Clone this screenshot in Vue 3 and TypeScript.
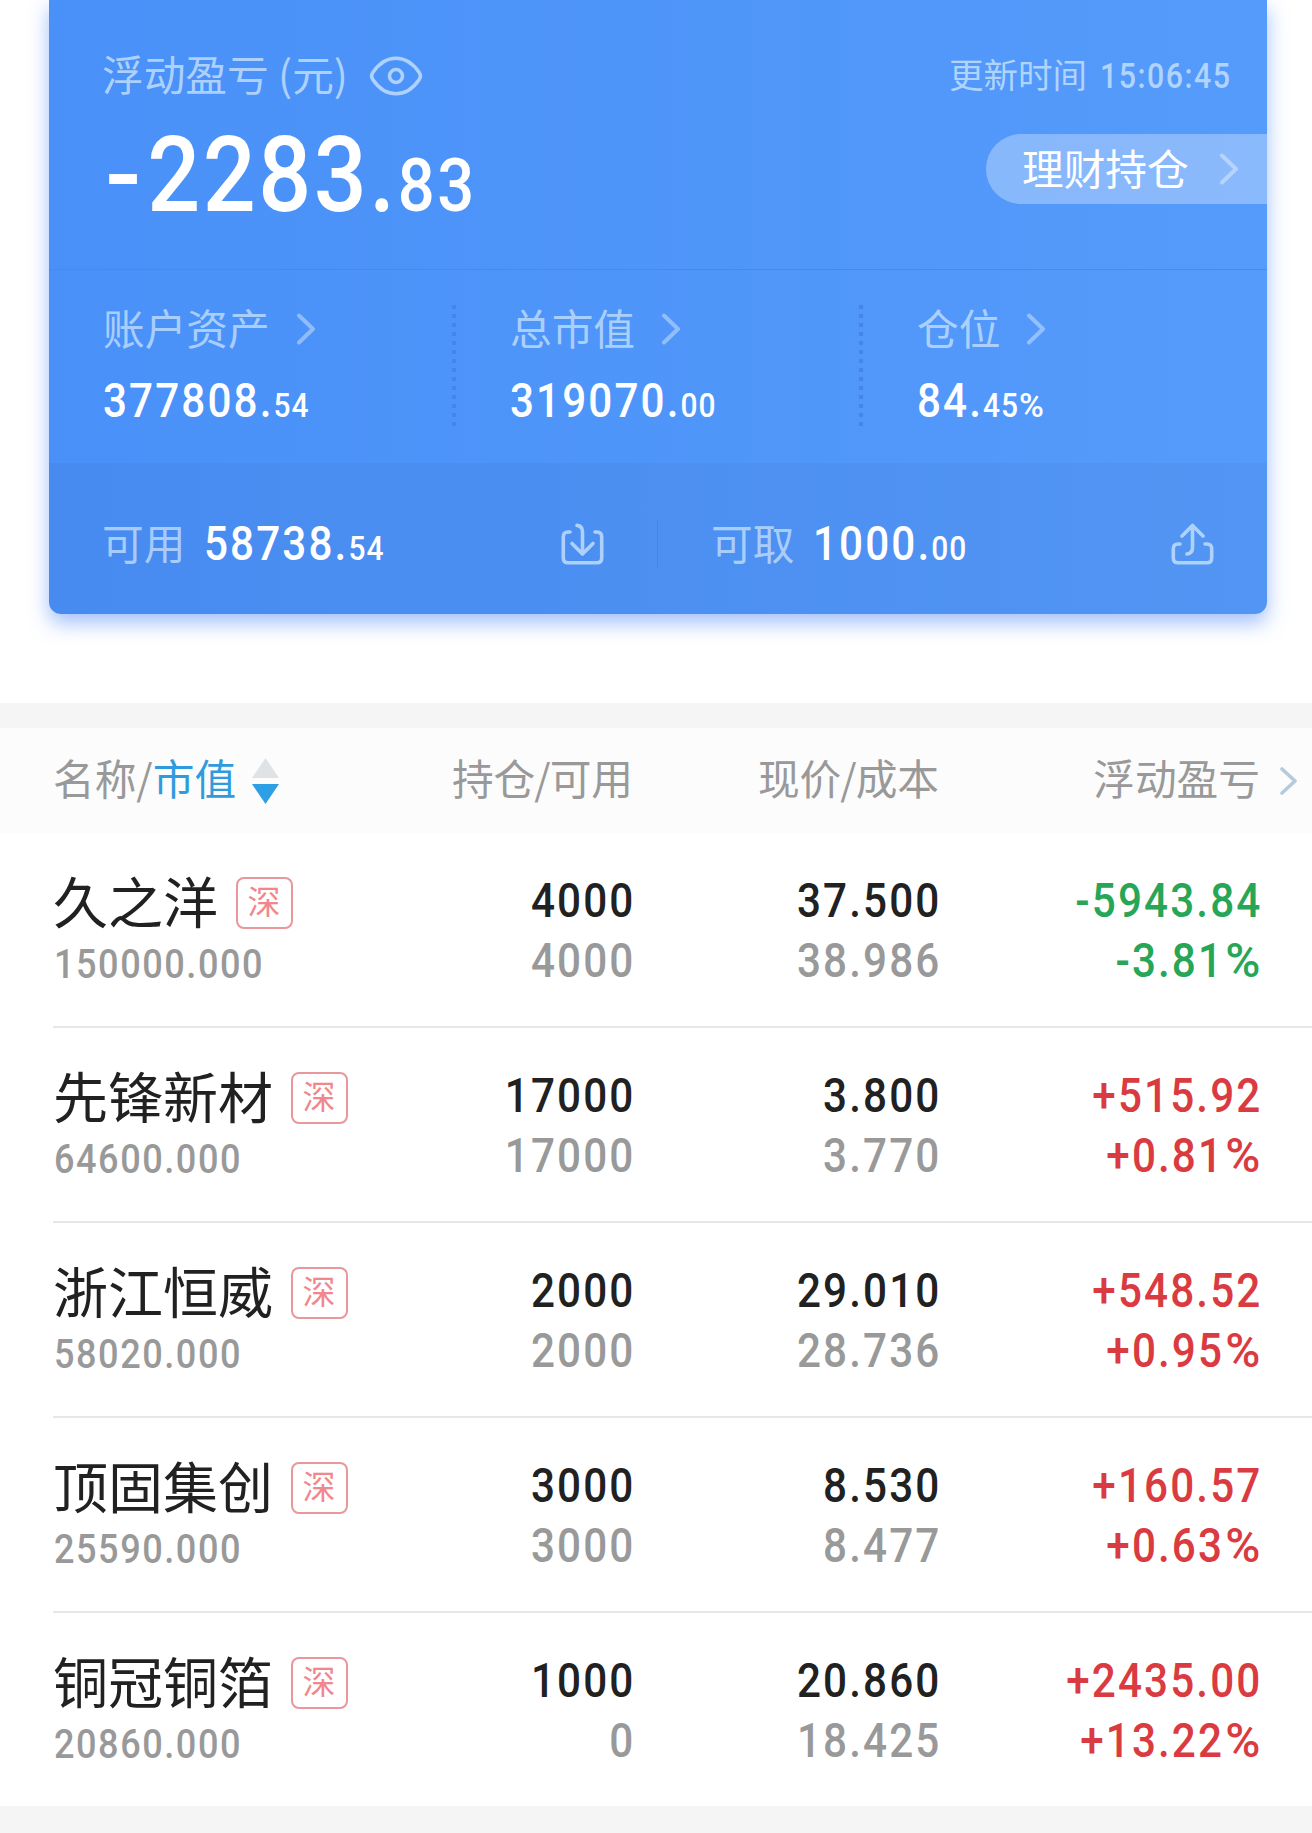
<script setup lang="ts">
interface Metric {
  label: string
  whole: string
  fraction: string
  unit?: string
}

interface Holding {
  name: string
  marketValue: string
  amount: string
  available: string
  price: string
  cost: string
  profit: string
  rate: string
}

const metrics: Metric[] = [
  { label: '账户资产', whole: '377808.', fraction: '54' },
  { label: '总市值', whole: '319070.', fraction: '00' },
  { label: '仓位', whole: '84.', fraction: '45', unit: '%' },
]

const holdings: Holding[] = [
  { name: '久之洋', marketValue: '150000.000', amount: '4000', available: '4000', price: '37.500', cost: '38.986', profit: '-5943.84', rate: '-3.81' },
  { name: '先锋新材', marketValue: '64600.000', amount: '17000', available: '17000', price: '3.800', cost: '3.770', profit: '+515.92', rate: '+0.81' },
  { name: '浙江恒威', marketValue: '58020.000', amount: '2000', available: '2000', price: '29.010', cost: '28.736', profit: '+548.52', rate: '+0.95' },
  { name: '顶固集创', marketValue: '25590.000', amount: '3000', available: '3000', price: '8.530', cost: '8.477', profit: '+160.57', rate: '+0.63' },
  { name: '铜冠铜箔', marketValue: '20860.000', amount: '1000', available: '0', price: '20.860', cost: '18.425', profit: '+2435.00', rate: '+13.22' },
]

const isLoss = (h: Holding): boolean => h.profit.startsWith('-')
</script>

<template>
  <main class="page">
    <section class="overview">
      <div class="card">
        <div class="summary">
          <div class="summary-main">
            <div class="summary-label">
              <span>浮动盈亏 (元)</span>
              <svg class="eye" viewBox="0 0 54 42" fill="none" stroke="currentColor" stroke-width="3.600">
                <path d="M3.600 17.800 C9.500 9 18 3.300 27 3.300 C36 3.300 44.500 9 50.400 17.800 Q52.300 21 50.400 24.200 C44.500 33 36 38.700 27 38.700 C18 38.700 9.500 33 3.600 24.200 Q1.700 21 3.600 17.800 Z" />
                <circle cx="27" cy="21" r="6.500" />
              </svg>
            </div>
            <div class="num hero"><span class="hero-sign">-</span>2283.<span class="hero-fraction">83</span></div>
          </div>
          <div class="summary-side">
            <div class="updated"><span>更新时间</span><span class="num from-right time">15:06:45</span></div>
            <div class="pill">
              <span>理财持仓</span>
              <svg class="chevron" viewBox="0 0 20 32" fill="none" stroke="currentColor" stroke-width="4" stroke-linecap="round" stroke-linejoin="round"><path d="M3 2.500 L17 16 L3 29.500" /></svg>
            </div>
          </div>
        </div>

        <div class="metrics">
          <div v-for="m in metrics" :key="m.label" class="metric">
            <div class="metric-label">
              <span>{{ m.label }}</span>
              <svg class="chevron" viewBox="0 0 20 32" fill="none" stroke="currentColor" stroke-width="4" stroke-linecap="round" stroke-linejoin="round"><path d="M3 2.500 L17 16 L3 29.500" /></svg>
            </div>
            <div class="num amount">{{ m.whole }}<span class="fraction">{{ m.fraction }}<span v-if="m.unit" class="percent from-left">{{ m.unit }}</span></span></div>
          </div>
        </div>

        <div class="funds">
          <div class="fund">
            <span class="fund-label">可用</span>
            <span class="num amount">58738.<span class="fraction">54</span></span>
            <svg class="transfer" viewBox="0 0 42 42" fill="none" stroke="currentColor" stroke-width="3.600" stroke-linecap="round" stroke-linejoin="round">
              <path d="M8.500 9 H6.500 Q1.800 9 1.800 14 V34.800 Q1.800 39.800 6.500 39.800 H35.500 Q40.200 39.800 40.200 34.800 V14 Q40.200 9 35.500 9 H33.500" />
              <path d="M15.500 2.400 Q21 2.900 21 9 V30 M10.500 20.500 L21 31 L31.500 20.500" />
            </svg>
          </div>
          <div class="fund">
            <span class="fund-label">可取</span>
            <span class="num amount">1000.<span class="fraction">00</span></span>
            <svg class="transfer" viewBox="0 0 42 42" fill="none" stroke="currentColor" stroke-width="3.600" stroke-linecap="round" stroke-linejoin="round">
              <path d="M8.500 21 H6.500 Q1.800 21 1.800 26 V34.800 Q1.800 39.800 6.500 39.800 H35.500 Q40.200 39.800 40.200 34.800 V26 Q40.200 21 35.500 21 H33.500" />
              <path d="M15.500 31 Q21 30.500 21 24.500 V3 M10.500 13 L21 2.400 L31.500 13" />
            </svg>
          </div>
        </div>
      </div>
    </section>

    <section class="holdings">
      <header class="columns head">
        <div class="head-name">
          <span>名称/<span class="active">市值</span></span>
          <svg class="sort" viewBox="0 0 27 46"><path d="M13.500 0 L27 20 H0 Z" fill="#dfe3e6" /><path d="M0 26 H27 L13.500 46 Z" fill="#2e9fe4" /></svg>
        </div>
        <div class="cell">持仓<span class="slash">/</span>可用</div>
        <div class="cell">现价<span class="slash">/</span>成本</div>
        <div class="cell">浮动盈亏</div>
        <svg class="more" viewBox="0 0 17 28" fill="none" stroke="#b6cade" stroke-width="3.600" stroke-linecap="round" stroke-linejoin="round"><path d="M2 2 L15 14 L2 26" /></svg>
      </header>

      <article v-for="h in holdings" :key="h.name" class="columns row">
        <div class="stock">
          <div class="stock-name"><span>{{ h.name }}</span><span class="badge">深</span></div>
          <div class="num market">{{ h.marketValue }}</div>
        </div>
        <div class="cell figures">
          <div class="num from-right">{{ h.amount }}</div>
          <div class="num from-right muted">{{ h.available }}</div>
        </div>
        <div class="cell figures">
          <div class="num from-right">{{ h.price }}</div>
          <div class="num from-right muted">{{ h.cost }}</div>
        </div>
        <div class="cell figures" :class="isLoss(h) ? 'loss' : 'gain'">
          <div class="num from-right">{{ h.profit }}</div>
          <div class="num from-right">{{ h.rate }}<span class="percent">%</span></div>
        </div>
      </article>
    </section>
  </main>
</template>

<style>
body {
  margin: 0;
  background: #f5f5f5;
}
</style>

<style scoped>
.page {
  width: 1312px;
  height: 1833px;
  overflow: hidden;
  background: #f5f5f5;
  font-family: "Noto Sans CJK SC", sans-serif;
  font-size: 41.7px;
  line-height: 42px;
  white-space: nowrap;
}

/* Narrow, evenly spaced figures */
.num {
  font-family: Roboto, sans-serif;
  font-weight: 500;
  letter-spacing: 0.05em;
  transform: scaleX(0.88);
  transform-origin: left center;
}
.num.from-right {
  transform-origin: right center;
  margin-right: -0.05em;
}
.percent {
  display: inline-block;
  margin-left: 0.12em;
  transform: scaleX(1.13);
  transform-origin: right center;
}
.percent.from-left {
  margin-left: 0;
  transform-origin: left center;
}

.overview {
  height: 703px;
  box-sizing: border-box;
  padding: 0 45px 0 49px;
  background: #fff;
}
.card {
  width: 1218px;
  height: 614px;
  display: flex;
  flex-direction: column;
  border-radius: 0 0 12px 12px;
  background: linear-gradient(90deg, #4990f8, #559bfb);
  box-shadow: 0 9px 20px rgba(70, 130, 250, 0.5);
  color: #fff;
}
.summary {
  height: 269px;
  display: flex;
  justify-content: space-between;
  border-bottom: 1px solid #4889ed;
}
.summary-main {
  padding: 52px 0 0 53px;
}
.summary-label {
  display: flex;
  align-items: center;
  height: 42px;
  color: rgba(225, 243, 255, 0.66);
}
.eye {
  width: 54px;
  height: 42px;
  margin: 5px 0 0 21px;
}
.hero {
  margin: 31px 0 0 3px;
  width: 500px;
  font-size: 106px;
  line-height: 100px;
  letter-spacing: 0.027em;
}
.hero-sign {
  display: inline-block;
  margin-right: 9px;
  transform: scaleX(1.15);
  transform-origin: left center;
}
.hero-fraction {
  font-size: 74px;
  letter-spacing: 0.04em;
}
.summary-side {
  display: flex;
  flex-direction: column;
  align-items: flex-end;
  padding-top: 52px;
}
.updated {
  width: 283px;
  margin-right: 35px;
  display: flex;
  justify-content: space-between;
  font-size: 34.5px;
  color: rgba(225, 243, 255, 0.66);
}
.updated .time {
  margin-left: -20px;
  margin-right: 0;
  padding-top: 3px;
}
.pill {
  width: 281px;
  height: 70px;
  margin-top: 37px;
  box-sizing: border-box;
  padding: 0 28px 0 36px;
  display: flex;
  align-items: center;
  justify-content: space-between;
  border-radius: 35px 0 0 35px;
  background: rgba(255, 255, 255, 0.31);
}
.pill span {
  margin-top: -4px;
}
.chevron {
  width: 20px;
  height: 32px;
  color: rgba(255, 255, 255, 0.38);
}

.metrics {
  height: 193px;
  display: flex;
}
.metric {
  width: 407px;
  box-sizing: border-box;
  padding: 36px 0 0 54px;
  background: repeating-linear-gradient(#4385e8 0 4px, transparent 4px 9px) right 0 top 35px / 4px 121px no-repeat;
}
.metric:last-child {
  width: 404px;
  background: none;
}
.metric-label {
  display: flex;
  align-items: center;
  gap: 26px;
  color: rgba(225, 243, 255, 0.64);
}
.metric-label .chevron {
  margin-top: 3px;
}
.amount {
  font-size: 48px;
  line-height: 50px;
}
.metric .amount {
  margin-top: 28px;
}
.fraction {
  font-size: 34px;
  letter-spacing: 0.032em;
}

.funds {
  flex: 1;
  display: flex;
  align-items: center;
  padding-top: 10px;
  border-radius: 0 0 12px 12px;
  background: rgba(60, 110, 190, 0.13);
}
.fund {
  width: 609px;
  height: 48px;
  box-sizing: border-box;
  padding: 0 53px 0 53px;
  display: flex;
  align-items: center;
}
.fund:first-child {
  border-right: 1px solid rgba(40, 100, 210, 0.25);
}
.fund-label {
  margin-top: -4px;
  color: rgba(225, 243, 255, 0.64);
}
.fund .amount {
  margin-left: 19px;
  padding-top: 4px;
}
.transfer {
  width: 43px;
  height: 42px;
  margin-left: auto;
  color: rgba(225, 243, 255, 0.66);
}

.holdings {
  border-top: 25px solid #f5f5f5;
  background: #fff;
}
.columns {
  display: grid;
  grid-template-columns: 380px 200px 306px 321px 1fr;
  box-sizing: border-box;
  padding-left: 53px;
}
.head {
  height: 105px;
  padding-bottom: 8px;
  align-items: center;
  background: #fcfcfc;
  color: #999;
}
.head-name {
  display: flex;
  align-items: center;
}
.slash {
  margin: 0 -1px;
}
.active {
  color: #2f9bde;
}
.sort {
  width: 27px;
  height: 46px;
  margin: 9px 0 0 16px;
}
.cell {
  text-align: right;
}
.more {
  width: 17px;
  height: 28px;
  margin: 9px 0 0 20px;
}
.row {
  height: 195px;
  background: linear-gradient(#e7e7e7, #e7e7e7) 53px 193px / 100% 2px no-repeat;
}
.row:last-child {
  height: 193px;
  background: none;
}
.stock {
  padding-top: 40px;
}
.stock-name {
  display: flex;
  align-items: center;
  height: 60px;
  font-size: 55px;
  line-height: 55px;
  color: #212121;
}
.stock-name > span:first-child {
  margin-top: -7px;
}
.badge {
  width: 57px;
  height: 52px;
  box-sizing: border-box;
  margin: 0 0 0 17.500px;
  border: 2px solid #e9979b;
  border-radius: 8px;
  font-size: 33px;
  line-height: 43px;
  text-align: center;
  color: #f1878c;
}
.market {
  margin-top: 6px;
  margin-left: 1px;
  width: 300px;
  font-size: 41px;
  line-height: 50px;
  letter-spacing: 0.043em;
  color: #999;
}
.figures {
  padding-top: 38px;
  font-size: 48px;
  line-height: 60px;
  color: #212121;
}
.muted {
  color: #999;
}
.loss {
  color: #27a658;
}
.gain {
  color: #d93b41;
}
</style>
